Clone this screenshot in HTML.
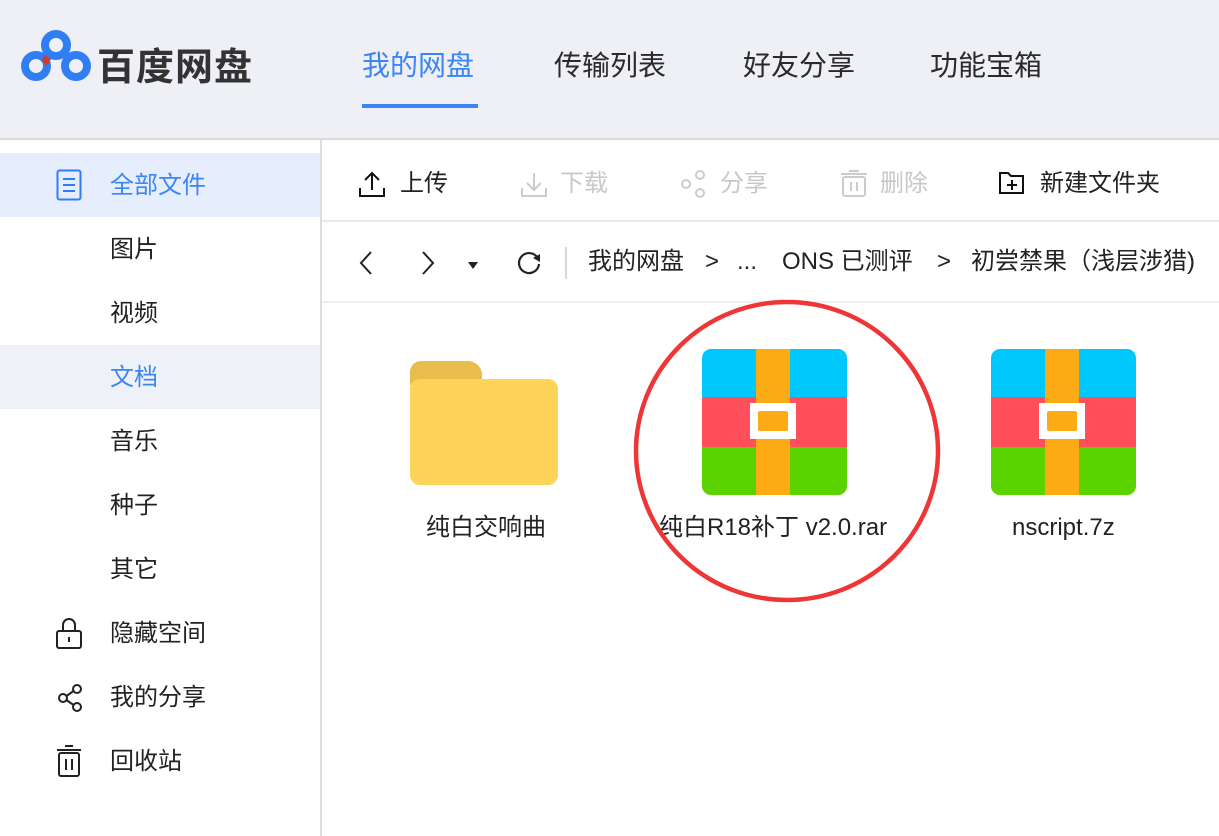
<!DOCTYPE html>
<html><head><meta charset="utf-8"><style>
*{margin:0;padding:0;box-sizing:border-box}
body{width:1219px;height:836px;overflow:hidden;background:#fff;font-family:"Liberation Sans","Noto Sans CJK SC",sans-serif;color:#222;position:relative}
.a{position:absolute;white-space:nowrap}
.hdr{position:absolute;left:0;top:0;width:1219px;height:140px;background:#eef0f5;border-bottom:2px solid #d9dbe0}
.side{position:absolute;left:320px;top:140px;width:2px;height:696px;background:#dcdde2}
.nav{font-size:28px;top:44px;color:#2a2a2a}
.si{font-size:24px;left:110px;color:#222;line-height:30px}
.tb{font-size:24px;top:169px;line-height:30px}
.bc{font-size:24px;top:247px;line-height:30px;color:#222}
.lbl{font-size:24px;top:513px;line-height:30px;color:#222}
</style></head><body>
<div class="hdr"></div>
<svg class="a" style="left:20px;top:28px" width="72" height="58" viewBox="0 0 72 58">
<circle cx="36" cy="17" r="11" fill="none" stroke="#2f7ef3" stroke-width="8"/>
<circle cx="16" cy="38" r="11" fill="none" stroke="#2f7ef3" stroke-width="8"/>
<circle cx="56" cy="38" r="11" fill="none" stroke="#2f7ef3" stroke-width="8"/>
<path d="M24 27 L31 31 L27 38 L22 33Z" fill="#d63a2c"/>
</svg>
<div class="a" style="left:97px;top:36px;font-size:38px;color:#333;font-weight:bold;letter-spacing:1px">百度网盘</div>
<div class="a nav" style="left:362px;color:#3a86f5">我的网盘</div>
<div class="a" style="left:362px;top:104px;width:116px;height:4px;background:#3a86f5"></div>
<div class="a nav" style="left:554px">传输列表</div>
<div class="a nav" style="left:743px">好友分享</div>
<div class="a nav" style="left:930px">功能宝箱</div>

<div class="a" style="left:0;top:153px;width:320px;height:64px;background:#e6edfc"></div>
<div class="a" style="left:0;top:345px;width:320px;height:64px;background:#eef1f8"></div>
<div class="side"></div>
<svg class="a" style="left:56px;top:169px" width="26" height="32"><rect x="1.5" y="1.5" width="23" height="29" rx="2" fill="none" stroke="#2f7ef3" stroke-width="2"/><path d="M7 10h12M7 16h12M7 22h12" stroke="#2f7ef3" stroke-width="2"/></svg>
<div class="a si" style="top:171px;color:#3a86f5">全部文件</div>
<div class="a si" style="top:235px">图片</div>
<div class="a si" style="top:299px">视频</div>
<div class="a si" style="top:363px;color:#3a86f5">文档</div>
<div class="a si" style="top:427px">音乐</div>
<div class="a si" style="top:491px">种子</div>
<div class="a si" style="top:555px">其它</div>
<svg class="a" style="left:55px;top:616px" width="28" height="34"><path d="M8 15V9a6 6 0 0 1 12 0v6" fill="none" stroke="#222" stroke-width="2"/><rect x="2" y="15" width="24" height="17" rx="2" fill="none" stroke="#222" stroke-width="2"/><path d="M14 21v5" stroke="#222" stroke-width="2"/></svg>
<div class="a si" style="top:619px">隐藏空间</div>
<svg class="a" style="left:56px;top:683px" width="28" height="30"><circle cx="7" cy="15" r="4" fill="none" stroke="#222" stroke-width="2"/><circle cx="21" cy="6" r="4" fill="none" stroke="#222" stroke-width="2"/><circle cx="21" cy="24" r="4" fill="none" stroke="#222" stroke-width="2"/><path d="M10.5 13l7-5M10.5 17l7 5" stroke="#222" stroke-width="2"/></svg>
<div class="a si" style="top:683px">我的分享</div>
<svg class="a" style="left:56px;top:744px" width="26" height="34"><path d="M1 6h24M9 2h8" stroke="#222" stroke-width="2"/><rect x="3" y="9" width="20" height="23" rx="2" fill="none" stroke="#222" stroke-width="2"/><path d="M10 15v11M16 15v11" stroke="#222" stroke-width="2"/></svg>
<div class="a si" style="top:747px">回收站</div>

<svg class="a" style="left:358px;top:170px" width="28" height="28"><path d="M14 20V3M7 10l7-7 7 7M2 18v8h24v-8" fill="none" stroke="#111" stroke-width="2"/></svg>
<div class="a tb" style="left:400px">上传</div>
<svg class="a" style="left:520px;top:170px" width="28" height="28"><path d="M14 3v17M7 13l7 7 7-7M2 18v8h24v-8" fill="none" stroke="#ccc" stroke-width="2"/></svg>
<div class="a tb" style="left:560px;color:#c8c8c8">下载</div>
<svg class="a" style="left:680px;top:170px" width="28" height="28"><circle cx="6" cy="14" r="4" fill="none" stroke="#ccc" stroke-width="2"/><circle cx="20" cy="5" r="4" fill="none" stroke="#ccc" stroke-width="2"/><circle cx="20" cy="23" r="4" fill="none" stroke="#ccc" stroke-width="2"/></svg>
<div class="a tb" style="left:720px;color:#c8c8c8">分享</div>
<svg class="a" style="left:840px;top:170px" width="28" height="28"><path d="M1 4h26M9 1h10" stroke="#ccc" stroke-width="2"/><rect x="3" y="7" width="22" height="19" rx="2" fill="none" stroke="#ccc" stroke-width="2"/><path d="M11 12v9M17 12v9" stroke="#ccc" stroke-width="2"/></svg>
<div class="a tb" style="left:880px;color:#c8c8c8">删除</div>
<svg class="a" style="left:998px;top:170px" width="28" height="28"><path d="M2 3h8l3 3h12v17H2z" fill="none" stroke="#111" stroke-width="2"/><path d="M14 10v10M9 15h10" stroke="#111" stroke-width="2"/></svg>
<div class="a tb" style="left:1040px">新建文件夹</div>
<div class="a" style="left:322px;top:220px;width:897px;height:2px;background:#eaeaea"></div>

<svg class="a" style="left:356px;top:250px" width="20" height="26"><path d="M15 2L5 13l10 11" fill="none" stroke="#222" stroke-width="2"/></svg>
<svg class="a" style="left:418px;top:250px" width="20" height="26"><path d="M5 2l10 11-10 11" fill="none" stroke="#222" stroke-width="2"/></svg>
<svg class="a" style="left:466px;top:260px" width="14" height="10"><path d="M2 2h10l-5 7z" fill="#222"/></svg>
<svg class="a" style="left:515px;top:249px" width="30" height="28"><path d="M22 8A10 10 0 1 0 24 15" fill="none" stroke="#222" stroke-width="2.2"/><path d="M18 9l7-4 0 8z" fill="#222"/></svg>
<div class="a" style="left:565px;top:247px;width:2px;height:32px;background:#d8d8d8"></div>
<div class="a bc" style="left:588px">我的网盘</div>
<div class="a bc" style="left:705px">&gt;</div>
<div class="a bc" style="left:737px">...</div>
<div class="a bc" style="left:782px">ONS 已测评</div>
<div class="a bc" style="left:937px">&gt;</div>
<div class="a bc" style="left:971px">初尝禁果（浅层涉猎)</div>
<div class="a" style="left:322px;top:301px;width:897px;height:2px;background:#eeeeee"></div>

<svg class="a" style="left:410px;top:360px" width="148" height="126"><path d="M0 12a11 11 0 0 1 11-11h47a14 14 0 0 1 14 14v10H0z" fill="#e9bd4b"/><rect x="0" y="19" width="148" height="106" rx="10" fill="#fdd35a"/></svg>
<div class="a lbl" style="left:426px">纯白交响曲</div>

<svg class="a" style="left:702px;top:349px" width="145" height="146"><defs><clipPath id="c1"><rect width="145" height="146" rx="9"/></clipPath></defs><g clip-path="url(#c1)"><rect width="145" height="48" fill="#00c8fd"/><rect y="48" width="145" height="50" fill="#ff4f5a"/><rect y="98" width="145" height="48" fill="#5bd300"/><rect x="54" width="34" height="146" fill="#fdab14"/><rect x="48" y="54" width="46" height="36" fill="#fff"/><rect x="56" y="62" width="30" height="20" rx="2" fill="#fdab14"/></g></svg>
<div class="a lbl" style="left:659px">纯白R18补丁 v2.0.rar</div>

<svg class="a" style="left:991px;top:349px" width="145" height="146"><g clip-path="url(#c1)"><rect width="145" height="48" fill="#00c8fd"/><rect y="48" width="145" height="50" fill="#ff4f5a"/><rect y="98" width="145" height="48" fill="#5bd300"/><rect x="54" width="34" height="146" fill="#fdab14"/><rect x="48" y="54" width="46" height="36" fill="#fff"/><rect x="56" y="62" width="30" height="20" rx="2" fill="#fdab14"/></g></svg>
<div class="a lbl" style="left:1012px">nscript.7z</div>

<svg class="a" style="left:630px;top:296px" width="316" height="312"><ellipse cx="157" cy="155" rx="151" ry="149" fill="none" stroke="#ee3636" stroke-width="4.5"/></svg>
</body></html>
